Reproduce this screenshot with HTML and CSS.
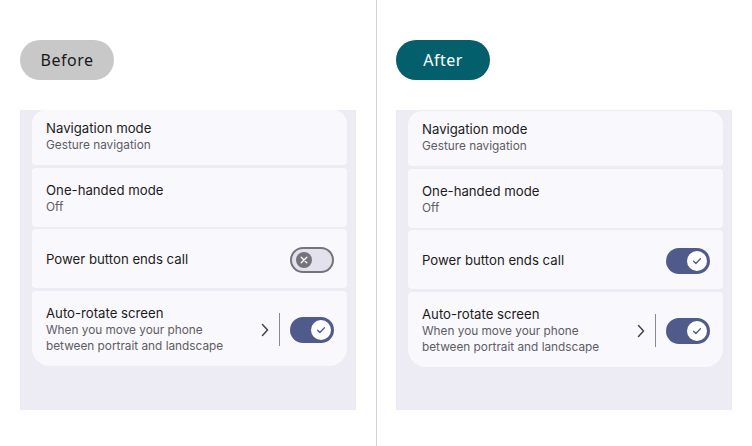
FILE: index.html
```html
<!DOCTYPE html>
<html>
<head>
<meta charset="utf-8">
<link rel="stylesheet" href="styles.css">
</head>
<body>
<div class="page">
  <section class="col col-left">
    <div class="pill pill-before">Before</div>
    <div class="panel">
      <div class="list">
        <div class="item item-first">
          <div class="text"><div class="title">Navigation mode</div><div class="sub">Gesture navigation</div></div>
        </div>
        <div class="item item-mid">
          <div class="text"><div class="title">One-handed mode</div><div class="sub">Off</div></div>
        </div>
        <div class="item item-mid">
          <div class="text"><div class="title">Power button ends call</div></div>
          <div class="trail">
            <div class="switch switch-off"><span class="thumb"><svg viewBox="0 0 16 16" width="16" height="16"><path d="M5.2 5.2L10.8 10.8M10.8 5.2L5.2 10.8" stroke="#ffffff" stroke-width="1.3" stroke-linecap="round"/></svg></span></div>
          </div>
        </div>
        <div class="item item-last">
          <div class="text"><div class="title">Auto-rotate screen</div><div class="sub">When you move your phone<br>between portrait and landscape</div></div>
          <div class="trail">
            <svg class="chev" viewBox="0 0 8 14" width="8" height="14"><path d="M1.5 1.5L6.5 7L1.5 12.5" fill="none" stroke="#45444b" stroke-width="1.5" stroke-linecap="round" stroke-linejoin="round"/></svg>
            <span class="vline"></span>
            <div class="switch switch-on"><span class="thumb"><svg viewBox="0 0 20 20" width="20" height="20"><path d="M6.6 10.3L8.9 12.5L13.4 7.8" fill="none" stroke="#505b8c" stroke-width="1.3" stroke-linecap="round" stroke-linejoin="round"/></svg></span></div>
          </div>
        </div>
      </div>
    </div>
  </section>
  <div class="sep"></div>
  <section class="col col-right">
    <div class="pill pill-after">After</div>
    <div class="panel">
      <div class="list list-right">
        <div class="item item-first">
          <div class="text"><div class="title">Navigation mode</div><div class="sub">Gesture navigation</div></div>
        </div>
        <div class="item item-mid">
          <div class="text"><div class="title">One-handed mode</div><div class="sub">Off</div></div>
        </div>
        <div class="item item-mid">
          <div class="text"><div class="title">Power button ends call</div></div>
          <div class="trail">
            <div class="switch switch-on"><span class="thumb"><svg viewBox="0 0 20 20" width="20" height="20"><path d="M6.6 10.3L8.9 12.5L13.4 7.8" fill="none" stroke="#505b8c" stroke-width="1.3" stroke-linecap="round" stroke-linejoin="round"/></svg></span></div>
          </div>
        </div>
        <div class="item item-last">
          <div class="text"><div class="title">Auto-rotate screen</div><div class="sub">When you move your phone<br>between portrait and landscape</div></div>
          <div class="trail">
            <svg class="chev" viewBox="0 0 8 14" width="8" height="14"><path d="M1.5 1.5L6.5 7L1.5 12.5" fill="none" stroke="#45444b" stroke-width="1.5" stroke-linecap="round" stroke-linejoin="round"/></svg>
            <span class="vline"></span>
            <div class="switch switch-on"><span class="thumb"><svg viewBox="0 0 20 20" width="20" height="20"><path d="M6.6 10.3L8.9 12.5L13.4 7.8" fill="none" stroke="#505b8c" stroke-width="1.3" stroke-linecap="round" stroke-linejoin="round"/></svg></span></div>
          </div>
        </div>
      </div>
    </div>
  </section>
</div>
</body>
</html>
```
FILE: styles.css
```css
* { box-sizing: border-box; }
html, body { margin: 0; padding: 0; background: #ffffff; }
body { font-family: Inter, Roboto, "Liberation Sans", sans-serif; }

.page {
  display: flex;
  width: 752px;
  height: 446px;
}

.col {
  display: flex;
  flex-direction: column;
  padding-top: 40px;
}
.col-left { width: 376px; padding-left: 20px; padding-right: 20px; }
.col-right { width: 375px; padding-left: 19px; padding-right: 20px; }

.sep { width: 1px; background: #d2d2d2; }

.pill {
  width: 94px;
  height: 40px;
  border-radius: 20px;
  display: flex;
  align-items: center;
  justify-content: center;
  font-family: "Noto Sans", sans-serif;
  font-size: 16px;
  letter-spacing: 0.5px;
}
.pill-before { background: #c8c8c8; color: #1a1a1a; }
.pill-after { background: #035f6b; color: #ffffff; }

.panel {
  margin-top: 30px;
  width: 336px;
  height: 300px;
  background: #edecf4;
  padding: 0 9px 0 12px;
}

.list {
  display: flex;
  flex-direction: column;
  gap: 2px;
}
.list-right { padding-top: 1px; }

.item {
  background: #f9f8fd;
  display: flex;
  align-items: center;
  padding: 2px 13px 0 14px;
  border-radius: 4px;
  height: 59px;
}
.item-first { height: 55px; border-radius: 14px 14px 4px 4px; margin-bottom: 1px; padding-top: 0; padding-bottom: 3px; }
.item-last { height: 75px; margin-top: 1px; border-radius: 4px 4px 18px 18px; }

.text { flex: 1; }
.title {
  font-size: 13.2px;
  line-height: 17px;
  color: #1d1b20;
}
.sub {
  font-size: 11.8px;
  line-height: 16px;
  color: #5e5c64;
}

.trail {
  display: flex;
  align-items: center;
}
.chev { display: block; margin-right: 10px; }
.vline { width: 1px; height: 33px; background: #8a8990; margin-right: 10px; }

.switch {
  width: 44px;
  height: 26px;
  border-radius: 13px;
  display: flex;
  align-items: center;
}
.switch-off {
  background: #e3e2ec;
  border: 2px solid #75747c;
  padding-left: 4px;
}
.switch-off .thumb {
  width: 16px;
  height: 16px;
  border-radius: 50%;
  background: #74737b;
  display: flex;
}
.switch-on {
  background: #505b8c;
  justify-content: flex-end;
  padding-right: 3px;
}
.switch-on .thumb {
  width: 20px;
  height: 20px;
  border-radius: 50%;
  background: #ffffff;
  display: flex;
}
.thumb svg { display: block; }
```
